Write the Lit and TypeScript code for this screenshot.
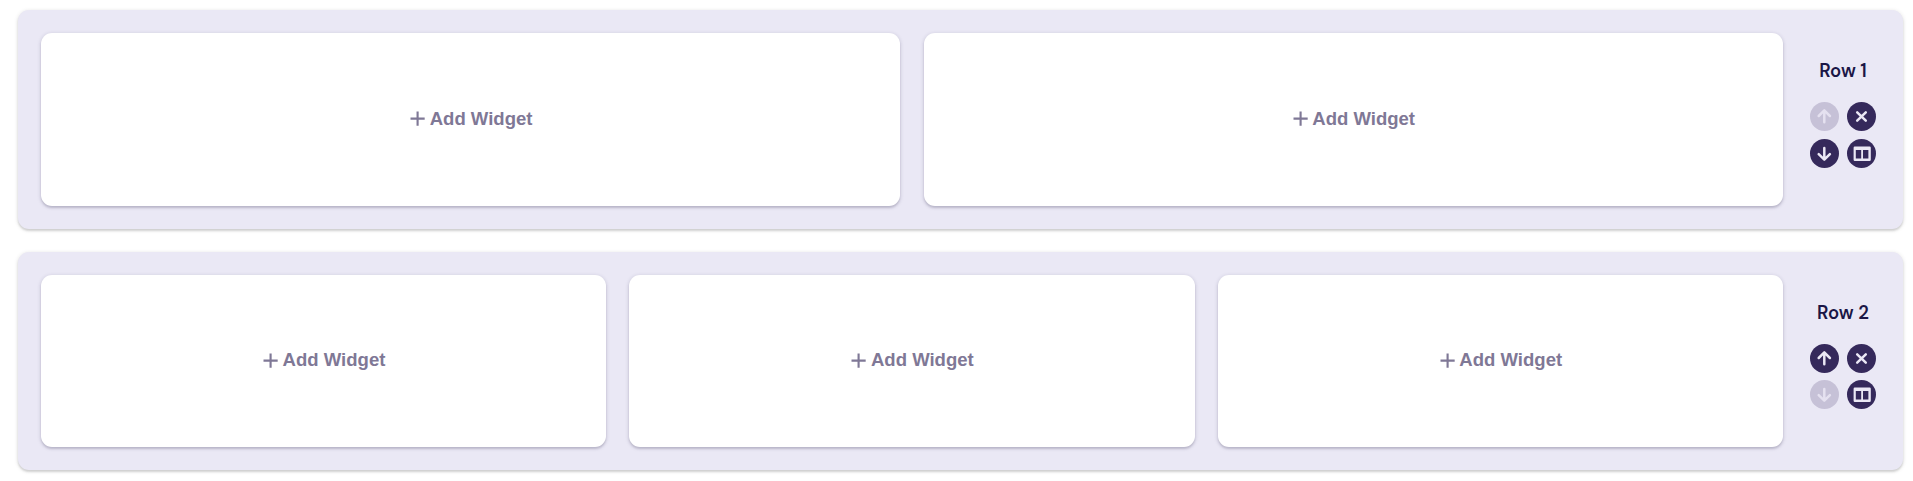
import { LitElement, html, svg, css } from "lit";
import { customElement, property } from "lit/decorators.js";

const icons = {
  up: svg`<path d="M14.3 20.2V8.8M8.7 14 14.3 8.4 19.9 14" />`,
  down: svg`<path d="M14.3 9V20.4M8.7 15.1 14.3 20.7 19.9 15.1" />`,
  close: svg`<path d="M10.2 10.3 18.8 18.7M18.8 10.3 10.2 18.7" />`,
  columns: svg`<path class="solid" fill-rule="evenodd" d="M7.8 7.6h14.8a1.2 1.2 0 0 1 1.2 1.2v12a1.2 1.2 0 0 1-1.2 1.2H7.8A1.2 1.2 0 0 1 6.6 20.8v-12A1.2 1.2 0 0 1 7.8 7.6ZM8.8 11.1v8.5h5.4v-8.5ZM16 11.1v8.5h5.4v-8.5Z" />`,
};

@customElement("icon-button")
class IconButton extends LitElement {
  @property() icon: keyof typeof icons = "up";
  @property({ type: Boolean }) disabled = false;

  static styles = css`
    :host { display: block; width: 29.3px; height: 29.3px; }
    button {
      display: block; width: 100%; height: 100%; padding: 0; border: 0;
      border-radius: 50%; background: #35295b; color: #ebe8f5;
    }
    button:disabled { background: #c6c1d7; color: #e5e1f0; }
    svg {
      display: block; width: 29.3px; height: 29.3px; fill: none;
      stroke: currentColor; stroke-width: 2.5; stroke-linejoin: round; stroke-linecap: round;
    }
    .solid { fill: currentColor; stroke: none; }
  `;

  render() {
    return html`<button ?disabled=${this.disabled}>
      <svg viewBox="0 0 29.3 29.3">${icons[this.icon]}</svg>
    </button>`;
  }
}

@customElement("widget-row")
class WidgetRow extends LitElement {
  @property({ type: Number }) number = 1;
  @property({ type: Number }) columns = 1;

  static styles = css`
    :host {
      display: flex; box-sizing: border-box; height: 218.8px; padding: 23px 27.3px 23px 23.5px;
      border-radius: 11px; background: #eae8f5;
      box-shadow: 0 1px 4px rgba(0, 0, 0, 0.14), 0 2px 2px rgba(0, 0, 0, 0.11);
    }
    .slots { display: flex; flex: 1; gap: 23.1px; }
    .slot {
      flex: 1; display: flex; align-items: center; justify-content: center; gap: 4.5px;
      padding: 0 0 1px 1px; border: 0; border-radius: 11px; background: #fff; color: #7f7896;
      font: bold 18.55px/22px "Liberation Sans", Arial, sans-serif;
      box-shadow: 0 1px 4px rgba(30, 20, 60, 0.18), 0 2px 2px rgba(30, 20, 60, 0.13);
    }
    .plus { width: 15.2px; height: 15.2px; stroke: currentColor; stroke-width: 2.1; fill: none; }
    .controls { display: flex; flex-direction: column; width: 66px; margin-left: 27px; padding-top: 26px; }
    .title {
      height: 24px; margin-bottom: 19.1px; text-align: center; color: #1b1646;
      font: 650 18.5px/24px "DM Sans", Inter, sans-serif; white-space: nowrap;
    }
    .buttons { display: grid; grid-template-columns: 29.3px 29.3px; gap: 7.2px; }
  `;

  render() {
    return html`
      <div class="slots">
        ${Array.from({ length: this.columns }, () => html`
          <button class="slot">
            <svg class="plus" viewBox="0 0 15 15"><path d="M7.5 .5v14M.5 7.5h14" /></svg>
            <span>Add Widget</span>
          </button>`)}
      </div>
      <div class="controls">
        <div class="title">Row ${this.number}</div>
        <div class="buttons">
          <icon-button icon="up" ?disabled=${this.number === 1}></icon-button>
          <icon-button icon="close"></icon-button>
          <icon-button icon="down" ?disabled=${this.number === 2}></icon-button>
          <icon-button icon="columns"></icon-button>
        </div>
      </div>`;
  }
}

@customElement("app-root")
class AppRoot extends LitElement {
  static styles = css`
    :host {
      display: flex; flex-direction: column; gap: 22.8px; box-sizing: border-box;
      height: 481px; padding: 10px 9.7px 0 17.5px; background: #fff;
    }
  `;

  render() {
    return html`
      <widget-row number="1" columns="2"></widget-row>
      <widget-row number="2" columns="3"></widget-row>`;
  }
}
